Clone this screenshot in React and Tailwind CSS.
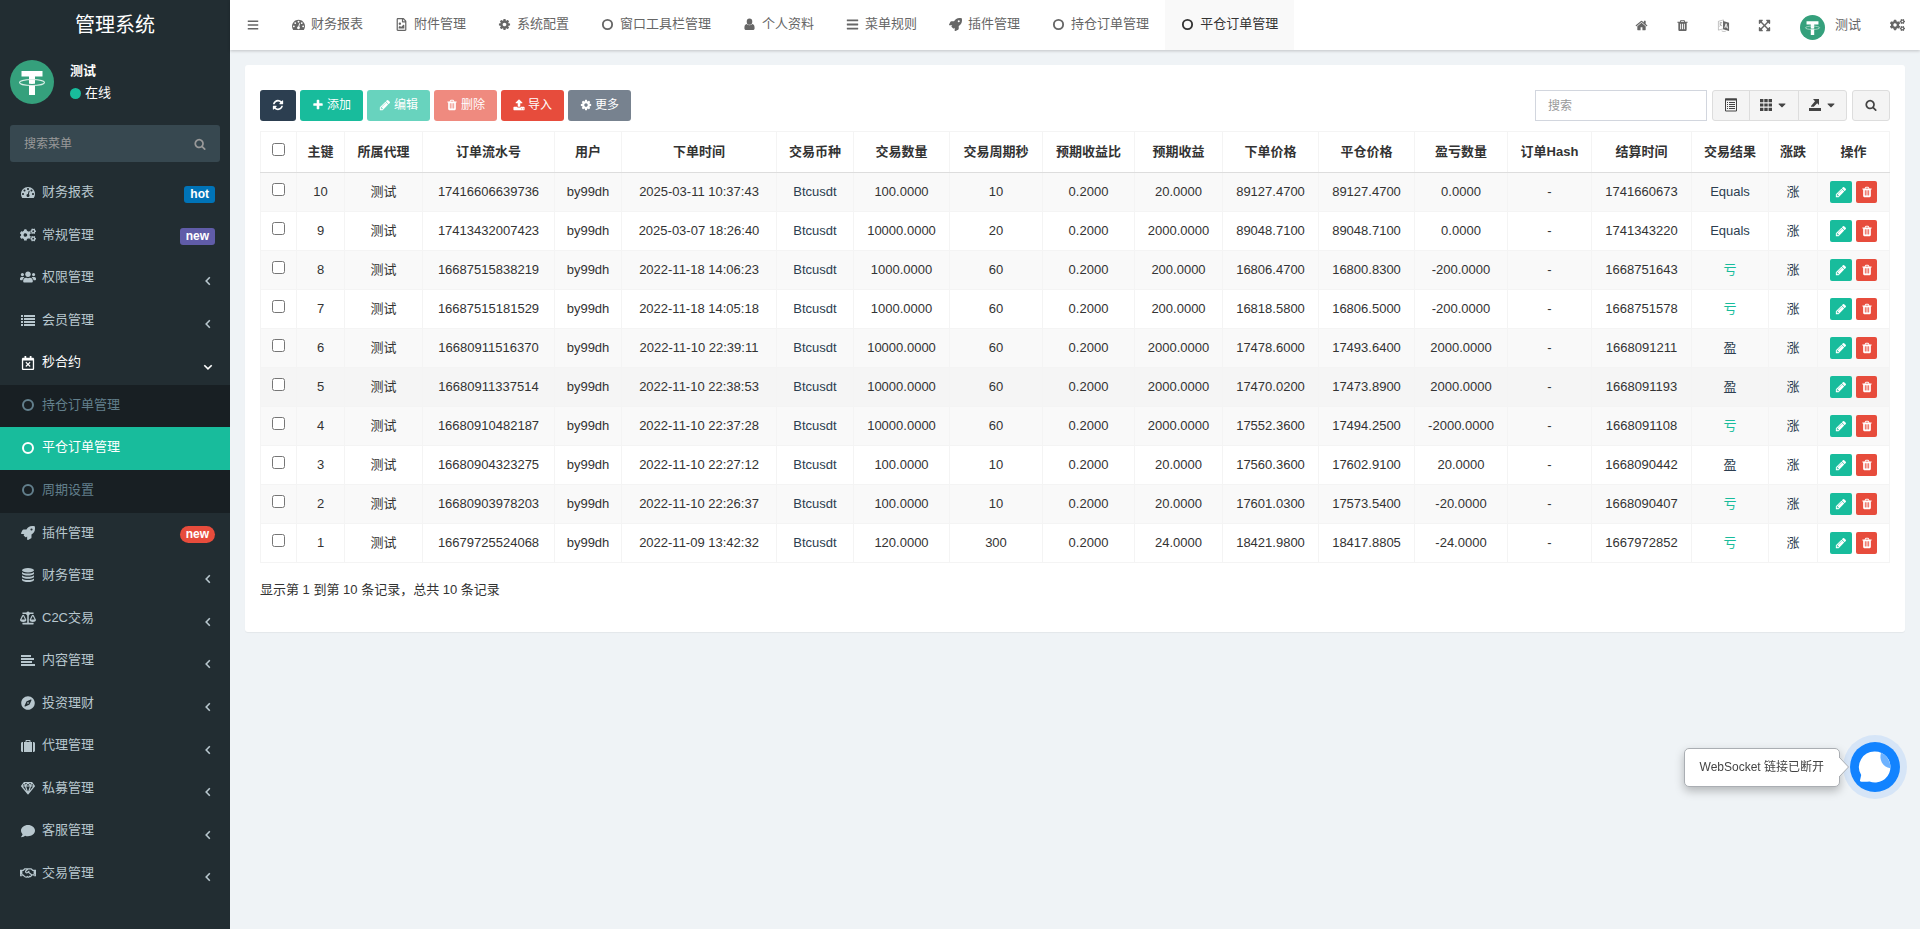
import { useState } from 'react'
import {
  FaBalanceScale,
  FaBars,
  FaCaretDown,
  FaCogs,
  FaComment,
  FaCompass,
  FaExpandArrowsAlt,
  FaRegCalendarTimes,
  FaRegFileImage,
  FaRegHandshake,
  FaRocket,
  FaSuitcase,
  FaUsers,
} from 'react-icons/fa'

// Solid glyphs that share the 1792 grid
const Glyph = ({ d, className }) => (
  <svg viewBox="0 0 1792 1792" className={className} fill="currentColor" aria-hidden="true">
    <path d={d} />
  </svg>
)

const PATHS = {
  dashboard:
    'M384 1152q0-53-37.500-90.500t-90.500-37.500-90.500 37.500-37.500 90.500 37.500 90.500 90.500 37.500 90.500-37.500 37.500-90.500zm192-448q0-53-37.500-90.500t-90.500-37.500-90.500 37.500-37.500 90.500 37.500 90.500 90.500 37.500 90.500-37.500 37.500-90.500zm428 481l101-382q6-26-7.500-48.500t-38.500-29.500-48 6.500-30 39.500l-101 382q-60 5-107 43.500t-63 98.500q-20 77 20 146t117 89 146-20 89-117q16-60-6-117t-72-91zm660-33q0-53-37.500-90.500t-90.500-37.500-90.500 37.500-37.500 90.500 37.500 90.500 90.500 37.500 90.500-37.500 37.500-90.500zm-640-640q0-53-37.500-90.500t-90.500-37.500-90.500 37.500-37.500 90.500 37.500 90.500 90.500 37.500 90.500-37.500 37.500-90.500zm448 192q0-53-37.500-90.500t-90.500-37.500-90.500 37.500-37.500 90.500 37.500 90.500 90.500 37.500 90.500-37.500 37.500-90.500zm320 448q0 261-141 483-19 29-54 29h-1402q-35 0-54-29-141-221-141-483 0-182 71-348t191-286 286-191 348-71 348 71 286 191 191 286 71 348z',
  refresh:
    'M1639 1056q0 5-1 7-64 268-268 434.5t-478 166.5q-146 0-282.5-55t-243.5-157l-129 129q-19 19-45 19t-45-19-19-45v-448q0-26 19-45t45-19h448q26 0 45 19t19 45-19 45l-137 137q71 66 161 102t187 36q134 0 250-65t186-179q11-17 53-117 8-23 30-23h192q13 0 22.5 9.5t9.5 22.5zm25-800v448q0 26-19 45t-45 19h-448q-26 0-45-19t-19-45 19-45l138-138q-148-137-349-137-134 0-250 65t-186 179q-11 17-53 117-8 23-30 23h-199q-13 0-22.5-9.5t-9.5-22.5v-7q65-268 270-434.5t480-166.5q146 0 284 55.5t245 156.5l130-129q19-19 45-19t45 19 19 45z',
  trash:
    'M704 1376v-704q0-14-9-23t-23-9h-64q-14 0-23 9t-9 23v704q0 14 9 23t23 9h64q14 0 23-9t9-23zm256 0v-704q0-14-9-23t-23-9h-64q-14 0-23 9t-9 23v704q0 14 9 23t23 9h64q14 0 23-9t9-23zm256 0v-704q0-14-9-23t-23-9h-64q-14 0-23 9t-9 23v704q0 14 9 23t23 9h64q14 0 23-9t9-23zm-544-992h448l-48-117q-7-9-17-11h-317q-10 2-17 11zm928 32v64q0 14-9 23t-23 9h-96v948q0 83-47 143.5t-113 60.5h-832q-66 0-113-58.500t-47-141.500v-952h-96q-14 0-23-9t-9-23v-64q0-14 9-23t23-9h309l70-167q15-37 54-63t79-26h320q40 0 79 26t54 63l70 167h309q14 0 23 9t9 23z',
  pencil:
    'M491 1536l91-91-235-235-91 91v107h128v128h107zm523-928q0-22-22-22-10 0-17 7l-542 542q-7 7-7 17 0 22 22 22 10 0 17-7l542-542q7-7 7-17zm-54-192l416 416-832 832h-416v-416zm683 96q0 53-37 90l-166 166-416-416 166-165q36-38 90-38 53 0 91 38l235 234q37 39 37 91z',
  plus: 'M1600 736v192q0 40-28 68t-68 28h-416v416q0 40-28 68t-68 28h-192q-40 0-68-28t-28-68v-416h-416q-40 0-68-28t-28-68v-192q0-40 28-68t68-28h416v-416q0-40 28-68t68-28h192q40 0 68 28t28 68v416h416q40 0 68 28t28 68z',
  cog: 'M1152 896q0-106-75-181t-181-75-181 75-75 181 75 181 181 75 181-75 75-181zm512-109v222q0 12-8 23t-20 13l-185 28q-19 54-39 91 35 50 107 138 10 12 10 25t-9 23q-27 37-99 108t-94 71q-12 0-26-9l-138-108q-44 23-91 38-16 136-29 186-7 28-36 28h-222q-14 0-24.500-8.500t-11.500-21.500l-28-184q-49-16-90-37l-141 107q-10 9-25 9-14 0-25-11-126-114-165-168-7-10-7-23 0-12 8-23 15-21 51-66.500t54-70.500q-27-50-41-99l-183-27q-13-2-21-12.500t-8-23.500v-222q0-12 8-23t19-13l186-28q14-46 39-92-40-57-107-138-10-12-10-24 0-10 9-23 26-36 98.500-107.500t94.500-71.500q13 0 26 10l138 107q44-23 91-38 16-136 29-186 7-28 36-28h222q14 0 24.500 8.500t11.500 21.500l28 184q49 16 90 37l142-107q9-9 24-9 13 0 25 10 129 119 165 170 7 8 7 22 0 12-8 23-15 21-51 66.500t-54 70.500q26 50 41 98l183 28q13 2 21 12.500t8 23.500z',
  search:
    'M1216 832q0-185-131.500-316.500t-316.500-131.500-316.500 131.500-131.500 316.500 131.500 316.500 316.500 131.500 316.500-131.500 131.500-316.500zm512 832q0 52-38 90t-90 38q-54 0-90-38l-343-342q-179 124-399 124-143 0-273.500-55.500t-225-150-150-225-55.500-273.500 55.500-273.500 150-225 225-150 273.500-55.500 273.500 55.500 225 150 150 225 55.500 273.500q0 220-124 399l343 343q37 37 37 90z',
  home: 'M1472 992v480q0 26-19 45t-45 19h-384v-384h-256v384h-384q-26 0-45-19t-19-45v-480q0-1 .5-3t.5-3l575-474 575 474q1 2 1 6zm223-69l-62 74q-8 9-21 11h-3q-13 0-21-7l-692-577-692 577q-12 8-24 7-13-2-21-11l-62-74q-8-10-7-23.500t11-21.500l719-599q32-26 76-26t76 26l244 204v-195q0-14 9-23t23-9h192q14 0 23 9t9 23v408l219 182q10 8 11 21.500t-7 23.500z',
  upload:
    'M1344 1472q0-26-19-45t-45-19-45 19-19 45 19 45 45 19 45-19 19-45zm256 0q0-26-19-45t-45-19-45 19-19 45 19 45 45 19 45-19 19-45zm128-224v320q0 40-28 68t-68 28h-1472q-40 0-68-28t-28-68v-320q0-40 28-68t68-28h427q21 56 70.500 92t110.500 36h256q61 0 110.500-36t70.500-92h427q40 0 68 28t28 68zm-325-648q-17 40-59 40h-256v448q0 26-19 45t-45 19h-256q-26 0-45-19t-19-45v-448h-256q-42 0-59-40-17-39 14-69l448-448q18-19 45-19t45 19l448 448q31 30 14 69z',
}

const Dashboard = (p) => <Glyph d={PATHS.dashboard} {...p} />
const Refresh = (p) => <Glyph d={PATHS.refresh} {...p} />
const Trash = (p) => <Glyph d={PATHS.trash} {...p} />
const Pencil = (p) => <Glyph d={PATHS.pencil} {...p} />
const Plus = (p) => <Glyph d={PATHS.plus} {...p} />
const Cog = (p) => <Glyph d={PATHS.cog} {...p} />
const Search = (p) => <Glyph d={PATHS.search} {...p} />
const Home = (p) => <Glyph d={PATHS.home} {...p} />
const Upload = (p) => <Glyph d={PATHS.upload} {...p} />

const CircleO = ({ className }) => (
  <svg viewBox="0 0 14 14" className={className} fill="none" stroke="currentColor" strokeWidth="2" aria-hidden="true">
    <circle cx="7" cy="7" r="5" />
  </svg>
)

const ListLines = ({ className }) => (
  <svg viewBox="0 0 14 14" className={className} fill="currentColor" aria-hidden="true">
    <path d="M0 2h2v2H0zM3 2h11v2H3zM0 5h2v2H0zM3 5h11v2H3zM0 8h2v2H0zM3 8h11v2H3zM0 11h2v2H0zM3 11h11v2H3z" />
  </svg>
)

const AlignLeft = ({ className }) => (
  <svg viewBox="0 0 14 14" className={className} fill="currentColor" aria-hidden="true">
    <path d="M0 2h10v2H0zM0 5h13v2H0zM0 8h11v2H0zM0 11h14v2H0z" />
  </svg>
)

const Database = ({ className }) => (
  <svg viewBox="0 0 14 14" className={className} fill="currentColor" aria-hidden="true">
    <ellipse cx="7" cy="2.200" rx="6" ry="2.200" />
    <path d="M1 4c2 2 10 2 12 0v1.800c-1 2.400-11 2.400-12 0zM1 7.200c2 2 10 2 12 0V9c-1 2.400-11 2.400-12 0zM1 10.400c2 2 10 2 12 0v1.500c-1 2.700-11 2.700-12 0z" />
  </svg>
)

const Diamond = ({ className }) => (
  <svg viewBox="0 0 14 14" className={className} fill="none" stroke="currentColor" strokeWidth="1.200" strokeLinejoin="round" aria-hidden="true">
    <path d="M3.200 1.500h7.600L13.400 5 7 12.800.6 5zM.6 5h12.800M4.400 5 7 12.600 9.600 5M3.400 1.600 4.400 5 7 1.600 9.600 5l1-3.400" />
  </svg>
)

const Suitcase = ({ className }) => (
  <svg viewBox="0 0 14 14" className={className} fill="currentColor" aria-hidden="true">
    <path d="M0 4.500C0 3.700.6 3 1.500 3H2v10h-.5C.6 13 0 12.400 0 11.500zM14 4.500c0-.8-.6-1.500-1.500-1.500H12v10h.5c.9 0 1.500-.6 1.500-1.500zM3 3h1.500V1.800c0-.5.3-.8.800-.8h3.400c.5 0 .8.300.8.800V3H11v10H3zM5.500 3h3V2h-3z" />
  </svg>
)

const UserSolid = ({ className }) => (
  <svg viewBox="0 0 14 14" className={className} fill="currentColor" aria-hidden="true">
    <ellipse cx="7" cy="4" rx="3" ry="3.400" />
    <path d="M4 6.500c1.700 1.900 4.300 1.900 6 0 1.900.3 2.500 2 2.500 4.200 0 1.400-.7 2.300-1.900 2.300H3.400c-1.200 0-1.900-.9-1.900-2.300C1.500 8.500 2.100 6.800 4 6.500z" />
  </svg>
)

const AngleLeft = ({ className }) => (
  <svg viewBox="0 0 14 14" className={className} fill="none" stroke="currentColor" strokeWidth="1.600" aria-hidden="true">
    <path d="M8.800 3.300 5.200 7l3.600 3.700" />
  </svg>
)

const AngleDown = ({ className }) => (
  <svg viewBox="0 0 14 14" className={className} fill="none" stroke="currentColor" strokeWidth="1.600" aria-hidden="true">
    <path d="M3.300 5.200 7 8.800l3.700-3.600" />
  </svg>
)

const Language = ({ className }) => (
  <svg viewBox="0 0 14 14" className={className} aria-hidden="true">
    <path d="M1.500 2.500 7 1v9.500L1.500 12z" fill="none" stroke="currentColor" strokeWidth=".7" opacity=".6" />
    <path d="M2.600 4.500l3-.8M4 3.500c.3 2-.2 3.500-1.300 4.600M3 5.500c.6 1 1.400 1.600 2.600 2" fill="none" stroke="currentColor" strokeWidth=".7" opacity=".7" />
    <path d="M6.500 2.200 13 4v9L6.500 11z" fill="currentColor" />
    <path d="M8.300 9.500 9.800 5l1.700 5.300M8.800 8.300l2.100.5" fill="none" stroke="#fff" strokeWidth=".9" />
    <path d="M5 12.800c1.500.8 3 .8 4.500.3" fill="none" stroke="currentColor" strokeWidth=".7" opacity=".6" />
  </svg>
)

const DetailView = ({ className }) => (
  <svg viewBox="0 0 12 14" className={className} fill="none" stroke="currentColor" aria-hidden="true">
    <path d="M.5 1v12h11V1z" />
    <path d="M0 1.500h12" strokeWidth="2" />
    <path d="M2 4.500h1M4 4.500h6M2 6.500h1M4 6.500h6M2 8.500h1M4 8.500h6M2 10.500h1M4 10.500h6" />
  </svg>
)

const Grid = ({ className }) => (
  <svg viewBox="0 0 12 12" className={className} fill="currentColor" aria-hidden="true">
    <path d="M0 0h3.400v3.200H0zM4.300 0h3.400v3.200H4.300zM8.600 0H12v3.200H8.600zM0 4.400h3.400v3.200H0zM4.300 4.400h3.400v3.200H4.300zM8.600 4.400H12v3.200H8.600zM0 8.800h3.400V12H0zM4.300 8.800h3.400V12H4.300zM8.600 8.800H12V12H8.600z" />
  </svg>
)

const Export = ({ className }) => (
  <svg viewBox="0 0 12 12" className={className} fill="currentColor" aria-hidden="true">
    <path d="M0 9h12v3H0zM4 0h6v6L8.200 4.200 4.800 7.800H2V7l4-4.800z" />
  </svg>
)

const Tether = ({ className }) => (
  <svg viewBox="0 0 44 44" className={className} aria-hidden="true">
    <circle cx="22" cy="22" r="22" fill="#35a07c" />
    <path d="M11.500 11h21v5.500H25V35h-6V16.500h-7.500z" fill="#fff" />
    <path d="M17 24.200c3 .5 7 .5 10 0" fill="none" stroke="#35a07c" strokeWidth="1.200" />
    <ellipse cx="22" cy="22.500" rx="12.500" ry="3" fill="none" stroke="#d9efe7" strokeWidth="1.100" />
  </svg>
)

const MENU = [
  { label: '财务报表', icon: Dashboard, badge: 'hot', badgeClass: 'rounded-[3px] bg-[#0073b7]' },
  { label: '常规管理', icon: FaCogs, badge: 'new', badgeClass: 'rounded-[3px] bg-[#605ca8]' },
  { label: '权限管理', icon: FaUsers },
  { label: '会员管理', icon: ListLines },
  {
    label: '秒合约',
    icon: FaRegCalendarTimes,
    open: true,
    children: ['持仓订单管理', '平仓订单管理', '周期设置'],
  },
  { label: '插件管理', icon: FaRocket, badge: 'new', badgeClass: 'rounded-full bg-[#e74c3c]' },
  { label: '财务管理', icon: Database },
  { label: 'C2C交易', icon: FaBalanceScale },
  { label: '内容管理', icon: AlignLeft },
  { label: '投资理财', icon: FaCompass },
  { label: '代理管理', icon: Suitcase },
  { label: '私募管理', icon: Diamond },
  { label: '客服管理', icon: FaComment },
  { label: '交易管理', icon: FaRegHandshake },
]

const TABS = [
  { label: '财务报表', icon: Dashboard },
  { label: '附件管理', icon: FaRegFileImage },
  { label: '系统配置', icon: Cog },
  { label: '窗口工具栏管理', icon: CircleO },
  { label: '个人资料', icon: UserSolid },
  { label: '菜单规则', icon: FaBars },
  { label: '插件管理', icon: FaRocket },
  { label: '持仓订单管理', icon: CircleO },
  { label: '平仓订单管理', icon: CircleO, active: true },
]

const COLUMNS = [
  { title: '主键', width: 'w-[48px]' },
  { title: '所属代理', width: 'w-[78px]' },
  { title: '订单流水号', width: 'w-[132px]' },
  { title: '用户', width: 'w-[67px]' },
  { title: '下单时间', width: 'w-[155px]' },
  { title: '交易币种', width: 'w-[77px]' },
  { title: '交易数量', width: 'w-[96px]' },
  { title: '交易周期秒', width: 'w-[93px]' },
  { title: '预期收益比', width: 'w-[92px]' },
  { title: '预期收益', width: 'w-[88px]' },
  { title: '下单价格', width: 'w-[96px]' },
  { title: '平仓价格', width: 'w-[96px]' },
  { title: '盈亏数量', width: 'w-[93px]' },
  { title: '订单Hash', width: 'w-[84px]' },
  { title: '结算时间', width: 'w-[100px]' },
  { title: '交易结果', width: 'w-[77px]' },
  { title: '涨跌', width: 'w-[49px]' },
]

// id, order no, time, amount, seconds, profit, open, close, result amount, settled at, result
const ROWS = [
  [10, '17416606639736', '2025-03-11 10:37:43', '100.0000', 10, '20.0000', '89127.4700', '89127.4700', '0.0000', '1741660673', 'Equals'],
  [9, '17413432007423', '2025-03-07 18:26:40', '10000.0000', 20, '2000.0000', '89048.7100', '89048.7100', '0.0000', '1741343220', 'Equals'],
  [8, '16687515838219', '2022-11-18 14:06:23', '1000.0000', 60, '200.0000', '16806.4700', '16800.8300', '-200.0000', '1668751643', '亏'],
  [7, '16687515181529', '2022-11-18 14:05:18', '1000.0000', 60, '200.0000', '16818.5800', '16806.5000', '-200.0000', '1668751578', '亏'],
  [6, '16680911516370', '2022-11-10 22:39:11', '10000.0000', 60, '2000.0000', '17478.6000', '17493.6400', '2000.0000', '1668091211', '盈'],
  [5, '16680911337514', '2022-11-10 22:38:53', '10000.0000', 60, '2000.0000', '17470.0200', '17473.8900', '2000.0000', '1668091193', '盈'],
  [4, '16680910482187', '2022-11-10 22:37:28', '10000.0000', 60, '2000.0000', '17552.3600', '17494.2500', '-2000.0000', '1668091108', '亏'],
  [3, '16680904323275', '2022-11-10 22:27:12', '100.0000', 10, '20.0000', '17560.3600', '17602.9100', '20.0000', '1668090442', '盈'],
  [2, '16680903978203', '2022-11-10 22:26:37', '100.0000', 10, '20.0000', '17601.0300', '17573.5400', '-20.0000', '1668090407', '亏'],
  [1, '16679725524068', '2022-11-09 13:42:32', '120.0000', 300, '24.0000', '18421.9800', '18417.8805', '-24.0000', '1667972852', '亏'],
]

function Sidebar() {
  return (
    <aside className="w-[230px] shrink-0 bg-[#222d32] text-white">
      <a href="#" className="block h-[50px] text-center text-xl leading-[50px]">管理系统</a>
      <div className="flex items-center gap-4 px-2.5 pt-2.5">
        <Tether className="size-11" />
        <div className="leading-[22px]">
          <p className="font-bold">测试</p>
          <a href="#" className="flex items-center gap-1">
            <span className="size-[11px] rounded-full bg-[#18bc9c]" />
            在线
          </a>
        </div>
      </div>
      <form className="mx-2.5 mt-[21px] mb-2.5 flex h-[37px] items-center rounded-[3px] bg-[#374850] text-[#999]">
        <input
          type="text"
          aria-label="搜索菜单"
          placeholder="搜索菜单"
          className="min-w-0 flex-1 bg-transparent pl-3.5 text-xs outline-none placeholder:text-[#999]"
        />
        <button type="button" aria-label="搜索" className="px-3.5">
          <Search className="size-3" />
        </button>
      </form>
      <ul className="text-sm">
        {MENU.map((item) => {
          const Icon = item.icon
          const Arrow = item.open ? AngleDown : AngleLeft
          return (
            <li key={item.label} className="text-[13px]">
              <a
                href="#"
                className={`flex items-center pt-[11px] pr-[15px] pb-[13px] pl-5 ${item.open ? 'text-white' : 'text-[#b8c7ce]'}`}
              >
                <span className="flex w-[22px] shrink-0">
                  <Icon className="h-3.5 w-4" />
                </span>
                <span className="flex-1">{item.label}</span>
                {item.badge ? (
                  <span className={`-mb-1 px-1.5 text-xs leading-[17px] font-bold text-white ${item.badgeClass}`}>
                    {item.badge}
                  </span>
                ) : (
                  <Arrow className="mt-1 -mb-1 size-3.5" />
                )}
              </a>
              {item.children && (
                <ul className="bg-[#181f23]">
                  {item.children.map((child) => (
                    <li key={child}>
                      <a
                        href="#"
                        className={`flex items-center pt-[11px] pb-[13px] pl-5 ${
                          child === '平仓订单管理' ? 'bg-[#18bc9c] text-white' : 'text-[#627f8c]'
                        }`}
                      >
                        <span className="flex w-[22px] shrink-0 pl-px">
                          <CircleO className="size-3.5" />
                        </span>
                        {child}
                      </a>
                    </li>
                  ))}
                </ul>
              )}
            </li>
          )
        })}
      </ul>
    </aside>
  )
}

function TopBar() {
  return (
    <header className="flex h-[50px] bg-white text-[#666] shadow-[0_1px_3px_rgba(0,0,0,0.2)]">
      <button type="button" aria-label="菜单" className="w-[46px] pl-[17px]">
        <FaBars className="size-3" />
      </button>
      <nav className="flex">
        {TABS.map(({ label, icon: Icon, active }) => (
          <a
            key={label}
            href="#"
            className={`flex items-center px-4 pb-0.5 ${active ? 'bg-[#f9f9f9] text-[#333]' : ''}`}
          >
            <span className="w-[19px]">
              <Icon className="size-[13px]" />
            </span>
            {label}
          </a>
        ))}
      </nav>
      <div className="ml-auto flex items-center">
        <a href="#" aria-label="主页" className="px-3.5"><Home className="size-[13px]" /></a>
        <a href="#" aria-label="清除缓存" className="px-3.5"><Trash className="size-[13px]" /></a>
        <a href="#" aria-label="语言" className="px-3.5"><Language className="size-[13px]" /></a>
        <a href="#" aria-label="全屏" className="px-3.5"><FaExpandArrowsAlt className="size-[13px]" /></a>
        <a href="#" className="flex items-center gap-2.5 px-[15px]">
          <Tether className="mt-1 size-[25px]" />
          测试
        </a>
        <a href="#" aria-label="设置" className="pr-[15px] pl-3.5"><FaCogs className="h-4 w-[15px]" /></a>
      </div>
    </header>
  )
}

const BTN = 'flex h-[31px] items-center gap-[3px] rounded-[3px] px-3 pb-px text-xs text-white'
const TOOL = 'flex h-[31px] items-center justify-center gap-1 border border-[#ddd] bg-[#f4f4f4] pb-0.5 text-[#444]'

function Toolbar() {
  const [keyword, setKeyword] = useState('')
  return (
    <div className="flex items-center justify-between">
      <div className="flex gap-1">
        <button type="button" aria-label="刷新" className={`${BTN} bg-[#2c3e50]`}><Refresh className="size-3" /></button>
        <button type="button" className={`${BTN} bg-[#18bc9c]`}><Plus className="size-3" />添加</button>
        <button type="button" disabled className={`${BTN} bg-[#18bc9c] opacity-65`}><Pencil className="size-3" />编辑</button>
        <button type="button" disabled className={`${BTN} bg-[#e74c3c] opacity-65`}><Trash className="size-3" />删除</button>
        <button type="button" className={`${BTN} bg-[#e74c3c]`}><Upload className="size-3" />导入</button>
        <button type="button" className={`${BTN} bg-[#77828f]`}><Cog className="size-3" />更多</button>
      </div>
      <div className="flex gap-[5px]">
        <input
          type="text"
          aria-label="搜索"
          placeholder="搜索"
          value={keyword}
          onChange={(e) => setKeyword(e.target.value)}
          className="h-[31px] w-[172px] border border-[#d2d6de] px-3 text-xs outline-none placeholder:text-[#999]"
        />
        <div className="flex">
          <button type="button" aria-label="切换" className={`${TOOL} w-[38px] rounded-l-[3px]`}>
            <DetailView className="h-3.5 w-3" />
          </button>
          <button type="button" aria-label="列" className={`${TOOL} -ml-px w-[50px]`}>
            <Grid className="size-3" /><FaCaretDown className="size-3" />
          </button>
          <button type="button" aria-label="导出数据" className={`${TOOL} -ml-px w-[49px] rounded-r-[3px]`}>
            <Export className="size-3" /><FaCaretDown className="size-3" />
          </button>
        </div>
        <button type="button" aria-label="普通搜索" className={`${TOOL} w-[38px] rounded-[3px]`}>
          <Search className="size-3" />
        </button>
      </div>
    </div>
  )
}

const CELL = 'border border-[#f4f4f4]'

const rowColor = (id) => {
  if (id === 5) return 'bg-[#f5f5f5]' // hovered row
  return id % 2 ? 'bg-white' : 'bg-[#f9f9f9]'
}

function OrderTable() {
  return (
    <table className="mt-2.5 w-full table-fixed border-collapse text-center text-[#333]">
      <thead>
        <tr className="h-[41px]">
          <th className={`${CELL} w-[36px] border-b-[#ddd]`}>
            <input type="checkbox" aria-label="全选" className="mx-auto mb-1.5 block size-[13px]" />
          </th>
          {COLUMNS.map((c) => (
            <th key={c.title} className={`${CELL} ${c.width} border-b-[#ddd] font-semibold`}>{c.title}</th>
          ))}
          <th className={`${CELL} w-[72px] border-b-[#ddd] font-semibold`}>操作</th>
        </tr>
      </thead>
      <tbody>
        {ROWS.map(([id, order, time, amount, seconds, profit, open, close, pnl, settled, result]) => (
          <tr key={id} className={`h-[39px] ${rowColor(id)}`}>
            <td className={CELL}>
              <input type="checkbox" aria-label={`选择 ${id}`} className="mx-auto mb-1.5 block size-[13px]" />
            </td>
            <td className={CELL}>{id}</td>
            <td className={CELL}>测试</td>
            <td className={CELL}>{order}</td>
            <td className={CELL}>by99dh</td>
            <td className={CELL}>{time}</td>
            <td className={CELL}><a href="#" className="text-[#2c3e50]">Btcusdt</a></td>
            <td className={CELL}>{amount}</td>
            <td className={CELL}>{seconds}</td>
            <td className={CELL}>0.2000</td>
            <td className={CELL}>{profit}</td>
            <td className={CELL}>{open}</td>
            <td className={CELL}>{close}</td>
            <td className={CELL}>{pnl}</td>
            <td className={CELL}>-</td>
            <td className={CELL}>{settled}</td>
            <td className={CELL}>
              <span className={result === '亏' ? 'text-[#18bc9c]' : 'text-[#2c3e50]'}>{result}</span>
            </td>
            <td className={CELL}><span className="text-[#2c3e50]">涨</span></td>
            <td className={CELL}>
              <div className="flex justify-center gap-1 text-white">
                <button type="button" aria-label="编辑" className="flex size-[22px] items-center justify-center rounded-[2px] bg-[#18bc9c]">
                  <Pencil className="size-3" />
                </button>
                <button type="button" aria-label="删除" className="flex h-[22px] w-[21px] items-center justify-center rounded-[2px] bg-[#e74c3c]">
                  <Trash className="size-3" />
                </button>
              </div>
            </td>
          </tr>
        ))}
      </tbody>
    </table>
  )
}

function ChatWidget() {
  return (
    <div className="fixed right-[13px] bottom-[130px] flex items-center">
      <div className="relative mr-[3px] rounded-[5px] border border-[#aaaeb3] bg-white px-[15px] py-2 text-xs leading-[21px] text-[#444] shadow-[0_4px_10px_rgba(0,0,0,0.25)]">
        WebSocket 链接已断开
        <svg viewBox="0 0 10 20" className="absolute top-2 -right-[10px] z-10 h-5 w-2.5" aria-hidden="true">
          <path d="M0 0l9.500 10L0 20" fill="#fff" stroke="#aaaeb3" />
        </svg>
      </div>
      <button type="button" aria-label="客服" className="size-16 rounded-full bg-[#d6e5f7] p-[7px]">
        <svg viewBox="0 0 50 50" aria-hidden="true">
          <circle cx="25" cy="25" r="25" fill="#1283ff" />
          <path d="M25 9.500a15.500 15.500 0 1 1-5.500 30c-2.500.3-5 .3-8 .2-1.500 0-1.900-1-1.300-2.200l1-4.500A15.500 15.500 0 0 1 25 9.500z" fill="#fff" />
          <path d="M31 10.700c5.500 2.300 9.500 8 9.500 15.500C32 25 29 17 31 10.700z" fill="#6db2ff" />
        </svg>
      </button>
    </div>
  )
}

export default function App() {
  return (
    <div className="flex min-h-screen bg-[#eff3f6] font-['Liberation_Sans','Noto_Sans_CJK_SC',sans-serif] text-[13px]">
      <Sidebar />
      <div className="min-w-0 flex-1">
        <TopBar />
        <main className="p-[15px]">
          <section className="rounded-[3px] bg-white px-[15px] pt-[25px] pb-8 shadow-[0_1px_1px_rgba(0,0,0,0.05)]">
            <Toolbar />
            <OrderTable />
            <p className="mt-4 leading-[21px] text-[#333]">显示第 1 到第 10 条记录，总共 10 条记录</p>
          </section>
        </main>
      </div>
      <ChatWidget />
    </div>
  )
}
